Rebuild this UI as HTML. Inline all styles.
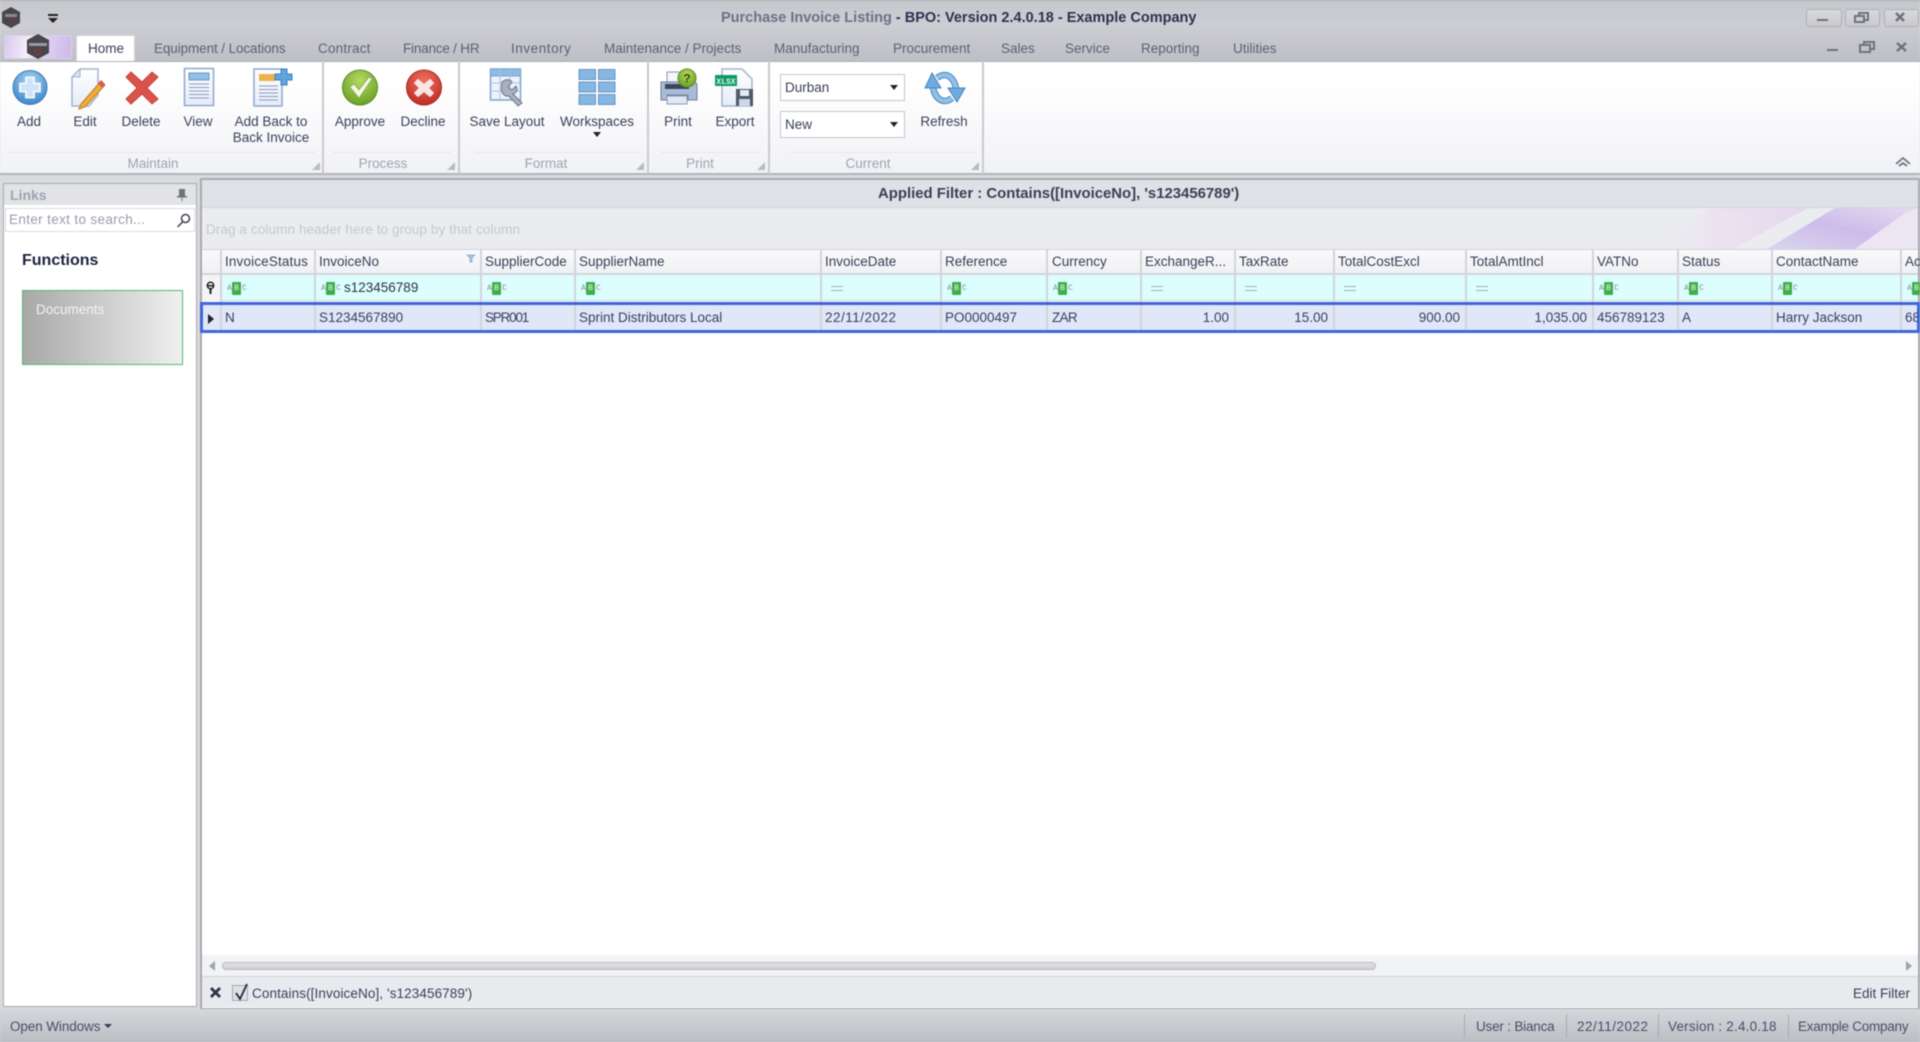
<!DOCTYPE html>
<html>
<head>
<meta charset="utf-8">
<title>Purchase Invoice Listing</title>
<style>
html,body{margin:0;padding:0;width:1920px;height:1042px;overflow:hidden;background:#d9dade}
body{position:relative;font-family:"Liberation Sans",sans-serif;font-size:13.5px;color:#33385a}
#wrap{position:absolute;left:0;top:0;width:1920px;height:1042px;filter:blur(.4px)}
.b{position:absolute}
.t{position:absolute;white-space:nowrap;line-height:16px;height:16px}
.c{transform:translateX(-50%)}
.r{transform:translateX(-100%)}
.tab{color:#5c6072}
.cap{color:#a0a4ae}
.hd{color:#3b3e55}
.cell{color:#3a3f5c}
.vl{position:absolute;width:2px;background:#d3d4da}
.lbl{color:#3a3f58}
svg{position:absolute;overflow:visible}
.ab{position:absolute;top:282px;width:20px;height:13px;font-family:"Liberation Mono",monospace;font-size:8px;line-height:13px}
.ab i{position:absolute;font-style:normal;color:#858a8c;top:0}
.ab i.m{left:5px;width:9px;height:13px;background:#3fae4a;color:#e8f8e8;text-align:center;border-radius:1px}
.ab i.a{left:0}.ab i.z{left:15px}
.eq{position:absolute;top:286px;width:12px;height:1px;border-top:1.5px solid #a8acb2;border-bottom:1.5px solid #a8acb2;padding-top:1.5px}
.sep{position:absolute;top:61px;height:113px;width:2px;background:#c9cad0}
.tri{position:absolute;width:0;height:0;border-left:8px solid transparent;border-bottom:8px solid #b9bbc2}
.cmb{position:absolute;left:780px;width:123px;height:25px;background:#fff;border:1px solid #c3c5cc}
.cmb:after{content:"";position:absolute;right:6px;top:10px;border-left:4px solid transparent;border-right:4px solid transparent;border-top:5px solid #222}
</style>
</head>
<body>
<div id="wrap">
<!-- title bar -->
<div class="b" style="left:0;top:0;width:1920px;height:61px;background:linear-gradient(#c6c7cc,#cdced3 40%,#bebfc6)"></div>
<div class="b" style="left:0;top:0;width:1920px;height:1px;background:#a8a9ad"></div>
<svg style="left:0;top:0" width="60" height="32"><polygon points="11,7 20,12 20,23 11,28 2,23 2,12" fill="#47474b"/><rect x="5" y="14" width="12" height="3" fill="#8b8b8f"/><circle cx="11" cy="21" r="2" fill="none" stroke="#8a3030"/><rect x="48" y="14" width="10" height="2" fill="#222"/><polygon points="48,18 58,18 53,23" fill="#222"/></svg>
<div class="t" style="left:721px;top:10px;font-weight:bold;font-size:14.5px;color:#6c7186">Purchase Invoice Listing <span style="color:#2d3150">- BPO: Version 2.4.0.18 - Example Company</span></div>
<!-- window buttons -->
<div class="b" style="left:1806px;top:9px;width:34px;height:16px;border:1px solid #aeb0b6;border-radius:3px;background:linear-gradient(#d8d9dd,#c8c9ce)"></div>
<div class="b" style="left:1845px;top:9px;width:33px;height:16px;border:1px solid #aeb0b6;border-radius:3px;background:linear-gradient(#d8d9dd,#c8c9ce)"></div>
<div class="b" style="left:1884px;top:9px;width:33px;height:16px;border:1px solid #aeb0b6;border-radius:3px;background:linear-gradient(#d8d9dd,#c8c9ce)"></div>
<svg style="left:1800px;top:0" width="120" height="60" fill="none" stroke="#6f7279" stroke-width="2">
<path d="M17 20h11"/>
<path d="M59 16v-3h9v7h-3M55 16h9v6h-9z"/>
<path d="M96 13l8 8M104 13l-8 8" stroke-width="2.5"/>
<path d="M27 50h11"/>
<path d="M64 45v-3h10v7h-3M60 45h10v7h-10z"/>
<path d="M97 43l9 8M106 43l-9 8" stroke-width="2.5"/>
</svg>
<!-- app button -->
<div class="b" style="left:4px;top:35px;width:66px;height:22px;border:1px solid #d5d5de;background:linear-gradient(100deg,#d9c7ef,#f4effa 35%,#e0cff3 60%,#cdb9ea)"></div>
<svg style="left:26px;top:33px" width="24" height="27"><polygon points="12,1 23,7 23,20 12,26 1,20 1,7" fill="#47474b"/><rect x="3" y="10" width="18" height="3" fill="#9a9a9e"/><circle cx="12" cy="19" r="2.5" fill="none" stroke="#a03030"/></svg>
<!-- tabs -->
<div class="b" style="left:76px;top:35px;width:59px;height:27px;background:#fff;border:1px solid #d2d3d8;border-bottom:0;box-sizing:border-box"></div>
<div class="t" style="left:88px;top:41px;color:#3a3f5c">Home</div>
<div class="t tab" style="left:154px;top:41px;letter-spacing:-.1px">Equipment / Locations</div>
<div class="t tab" style="left:318px;top:41px;letter-spacing:.2px">Contract</div>
<div class="t tab" style="left:403px;top:41px;letter-spacing:-.2px">Finance / HR</div>
<div class="t tab" style="left:511px;top:41px;letter-spacing:.55px">Inventory</div>
<div class="t tab" style="left:604px;top:41px">Maintenance / Projects</div>
<div class="t tab" style="left:774px;top:41px">Manufacturing</div>
<div class="t tab" style="left:893px;top:41px">Procurement</div>
<div class="t tab" style="left:1001px;top:41px">Sales</div>
<div class="t tab" style="left:1065px;top:41px">Service</div>
<div class="t tab" style="left:1141px;top:41px">Reporting</div>
<div class="t tab" style="left:1233px;top:41px">Utilities</div>
<!-- ribbon -->
<div class="b" style="left:0;top:61px;width:1920px;height:114px;background:linear-gradient(#fff 20%,#f1f2f6);border-top:1px solid #b0b1b6;border-bottom:2px solid #b3b4ba;box-sizing:border-box"></div>
<div class="sep" style="left:322px"></div><div class="sep" style="left:458px"></div><div class="sep" style="left:647px"></div><div class="sep" style="left:768px"></div><div class="sep" style="left:982px"></div>
<div class="b" style="left:10px;top:152px;width:305px;height:1px;background:#e6e7eb"></div>
<div class="b" style="left:332px;top:152px;width:120px;height:1px;background:#e6e7eb"></div>
<div class="b" style="left:475px;top:152px;width:165px;height:1px;background:#e6e7eb"></div>
<div class="b" style="left:660px;top:152px;width:100px;height:1px;background:#e6e7eb"></div>
<div class="b" style="left:790px;top:152px;width:185px;height:1px;background:#e6e7eb"></div>
<div class="tri" style="left:312px;top:162px"></div><div class="tri" style="left:447px;top:162px"></div><div class="tri" style="left:636px;top:162px"></div><div class="tri" style="left:757px;top:162px"></div><div class="tri" style="left:971px;top:162px"></div>
<!-- ribbon icons -->
<svg style="left:0;top:60px" width="1000" height="60">
<defs>
<radialGradient id="bl" cx=".5" cy=".3" r=".8"><stop offset="0" stop-color="#a8d4f2"/><stop offset="1" stop-color="#2f7cc4"/></radialGradient>
<radialGradient id="gr" cx=".5" cy=".3" r=".8"><stop offset="0" stop-color="#b8d860"/><stop offset="1" stop-color="#5c9a1e"/></radialGradient>
<radialGradient id="rd" cx=".5" cy=".3" r=".8"><stop offset="0" stop-color="#ee7060"/><stop offset="1" stop-color="#b8231c"/></radialGradient>
<linearGradient id="pg" x1="0" y1="0" x2="0" y2="1"><stop offset="0" stop-color="#fff"/><stop offset="1" stop-color="#e6ecf7"/></linearGradient>
</defs>
<!-- add -->
<circle cx="30" cy="27.5" r="17" fill="url(#bl)" stroke="#3a78b8"/>
<path d="M26 17.500h8v6h6v8h-6v6h-8v-6h-6v-8h6z" fill="#cfe4f5" stroke="#f4fafe" stroke-width="1.800"/>
<!-- edit -->
<path d="M80 9h18v26l-9 11h-17v-29z" fill="url(#pg)" stroke="#a4b3cf" stroke-width="1.500"/>
<path d="M72 17h8v-8z" fill="#dde4f0" stroke="#a4b3cf"/>
<path d="M81 44l20-23 4 4-20 22-6 2z" fill="#f0a93a" stroke="#b98028"/>
<path d="M98 23l3-3 4 4-3 4z" fill="#d85a50"/>
<!-- delete -->
<path d="M131 12l11 10 10-10 6 5-11 11 11 11-6 5-10-10-11 10-5-5 11-11-11-11z" fill="#d9534a" stroke="#c8453c"/>
<!-- view -->
<rect x="184.500" y="8.500" width="29" height="37" fill="url(#pg)" stroke="#8ea6d0" stroke-width="1.500"/>
<rect x="189" y="13" width="20" height="7" fill="#8fc0e6" stroke="#6e94c0"/>
<path d="M189 24h20M189 27.500h20M189 31h20M189 34.500h20M189 38h20" stroke="#8a9cc4"/>
<!-- addback -->
<path d="M254 9h28v26l0 11h-28z" fill="url(#pg)" stroke="#8ea6d0" stroke-width="1.500"/>
<rect x="259" y="14" width="16" height="7" fill="#eeb04a"/>
<path d="M259 26h19M259 29.500h19M259 33h19M259 36.500h19M259 40h19" stroke="#8a9cc4"/>
<path d="M281 9h6v5h5v6h-5v5h-6v-5h-6v-6h6z" fill="#5fa6dc" stroke="#3f80bc"/>
<!-- approve -->
<circle cx="360" cy="27.500" r="17.500" fill="url(#gr)" stroke="#5a8a20"/>
<path d="M350 27l4-3 5 6 10-13 3 2-13 19z" fill="#f2f8e8" stroke="#86a850" stroke-width=".7"/>
<!-- decline -->
<circle cx="424" cy="27.500" r="17.500" fill="url(#rd)" stroke="#a82820"/>
<path d="M418 19.500l6 5 6-5 3.500 3.500-5 5 5 5-3.500 3.500-6-5-6 5-3.500-3.500 5-5-5-5z" fill="#f6e6e4" stroke="#f6e6e4" stroke-linejoin="round"/>
<!-- save layout -->
<rect x="490.500" y="9" width="30" height="31" fill="#eef3fb" stroke="#7ea3d0" stroke-width="1.500"/>
<rect x="490.500" y="9" width="30" height="7" fill="#8dbce4" stroke="#7ea3d0"/>
<path d="M500 9v31M510 9v31M490 23h30M490 31h30" stroke="#a9c2e2"/>
<path d="M502 22c3-3 8-3 10 0l-4 5 4 3 4-4c2 3 1 7-3 8l9 9-4 3-9-10c-5 1-9-3-7-14z" fill="#a9b1bd" stroke="#6d7582"/>
<!-- workspaces -->
<g fill="#86b6e2" stroke="#6795c6"><rect x="579" y="9.500" width="16.500" height="10"/><rect x="598.500" y="9.500" width="16.500" height="10"/><rect x="579" y="22" width="16.500" height="10"/><rect x="598.500" y="22" width="16.500" height="10"/><rect x="579" y="34.500" width="16.500" height="10"/><rect x="598.500" y="34.500" width="16.500" height="10"/></g>
<!-- print -->
<rect x="667" y="12" width="22" height="10" fill="#f3f5fa" stroke="#8d98aa"/>
<path d="M661 22h33a3 3 0 0 1 3 3v15h-9v-5h-21v5h-6z" fill="#a8bcd8" stroke="#6d7f9a"/>
<rect x="665" y="24" width="24" height="5" fill="#3c4656"/>
<rect x="667" y="36" width="20" height="8" fill="#dfe8f5" stroke="#8d98aa"/>
<circle cx="687" cy="18" r="9" fill="url(#gr)" stroke="#5a8a20"/>
<text x="687" y="22.500" text-anchor="middle" font-family="Liberation Sans" font-weight="bold" font-size="12" fill="#2f4a10">?</text>
<!-- export -->
<path d="M722 9h20l10 10v27h-30z" fill="url(#pg)" stroke="#a4b3cf" stroke-width="1.500"/>
<rect x="715" y="15" width="22" height="11" fill="#0d9a66"/>
<text x="726" y="24" text-anchor="middle" font-family="Liberation Mono" font-weight="bold" font-size="8" fill="#dff5ea">XLSX</text>
<rect x="736" y="29" width="17" height="17" fill="#4d5a6a"/><rect x="740" y="30" width="9" height="6" fill="#e6ebf2"/><rect x="739" y="39" width="11" height="7" fill="#cfd7e2"/>
<!-- refresh -->
<g fill="none" stroke-linecap="butt">
<path d="M937 18C945 12 953 15 956 28" stroke="#4a86bc" stroke-width="6.500"/>
<path d="M952 38C945 44 936 41 933 28" stroke="#4a86bc" stroke-width="6.500"/>
<path d="M937 18C945 12 953 15 956 28" stroke="#8fc2ea" stroke-width="4.500"/>
<path d="M952 38C945 44 936 41 933 28" stroke="#8fc2ea" stroke-width="4.500"/>
</g>
<polygon points="932,13 925,28 941,28" fill="#6caadf" stroke="#4a86bc"/>
<polygon points="957,42 948,28 965,28" fill="#6caadf" stroke="#4a86bc"/>
<!-- dropdown arrow workspaces -->
<polygon points="593,132 601,132 597,137" fill="#222" transform="translate(0,-60)"/>
</svg>
<!-- ribbon labels -->
<div class="t c lbl" style="left:29px;top:114px">Add</div>
<div class="t c lbl" style="left:85px;top:114px">Edit</div>
<div class="t c lbl" style="left:141px;top:114px">Delete</div>
<div class="t c lbl" style="left:198px;top:114px">View</div>
<div class="t c lbl" style="left:271px;top:114px">Add Back to</div>
<div class="t c lbl" style="left:271px;top:130px">Back Invoice</div>
<div class="t c lbl" style="left:360px;top:114px">Approve</div>
<div class="t c lbl" style="left:423px;top:114px">Decline</div>
<div class="t c lbl" style="left:507px;top:114px">Save Layout</div>
<div class="t c lbl" style="left:597px;top:114px">Workspaces</div>
<div class="t c lbl" style="left:678px;top:114px">Print</div>
<div class="t c lbl" style="left:735px;top:114px">Export</div>
<div class="t c lbl" style="left:944px;top:114px">Refresh</div>
<div class="t c cap" style="left:153px;top:156px">Maintain</div>
<div class="t c cap" style="left:383px;top:156px">Process</div>
<div class="t c cap" style="left:546px;top:156px">Format</div>
<div class="t c cap" style="left:700px;top:156px">Print</div>
<div class="t c cap" style="left:868px;top:156px">Current</div>
<div class="cmb" style="top:74px"></div><div class="cmb" style="top:111px"></div>
<div class="t lbl" style="left:785px;top:80px">Durban</div>
<div class="t lbl" style="left:785px;top:117px">New</div>
<svg style="left:1890px;top:150px" width="24" height="20" fill="none" stroke="#707480" stroke-width="1.800"><path d="M6 14l7-6 7 6M9 16l4-3 4 3"/></svg>
<!-- left panel -->
<div class="b" style="left:3px;top:183px;width:194px;height:824px;background:#fff;border:1px solid #a9aab0;box-sizing:border-box"></div>
<div class="b" style="left:4px;top:184px;width:192px;height:21px;background:#e2e3e7"></div>
<div class="t" style="left:10px;top:187px;font-weight:bold;font-size:14px;color:#9fa3ae">Links</div>
<svg style="left:176px;top:189px" width="12" height="13" fill="#6f7279"><rect x="3" y="0" width="6" height="7"/><rect x="1" y="7" width="10" height="1.500"/><rect x="5.500" y="8" width="1" height="4"/></svg>
<div class="b" style="left:5px;top:208px;width:190px;height:24px;background:#fff;border:1px solid #dcdde3;box-sizing:border-box"></div>
<div class="t" style="left:9px;top:212px;color:#989cac;letter-spacing:.35px">Enter text to search...</div>
<svg style="left:176px;top:213px" width="15" height="15" fill="none" stroke="#41444e" stroke-width="1.500"><circle cx="9.500" cy="5.500" r="4"/><path d="M6.500 9l-5 5"/></svg>
<div class="t" style="left:22px;top:253px;font-weight:bold;font-size:16px;color:#1e2240">Functions</div>
<div class="b" style="left:22px;top:290px;width:161px;height:75px;background:linear-gradient(90deg,#a8a8a8,#f0f0f0);border:1.500px solid #4fb978;box-sizing:border-box"></div>
<div class="t" style="left:36px;top:302px;color:#f2f2f2">Documents</div>
<!-- grid area -->
<div class="b" style="left:200px;top:178px;width:1720px;height:831px;background:#fff;border:1px solid #a9aab0;border-width:2px 2px 1px 2px;box-sizing:border-box"></div>
<div class="b" style="left:202px;top:180px;width:1716px;height:27px;background:#e0e1e6;border-bottom:1px solid #d3d4da;box-sizing:content-box"></div>
<div class="t" style="left:878px;top:186px;font-weight:bold;font-size:14.9px;color:#3b3e55">Applied Filter : Contains([InvoiceNo], 's123456789')</div>
<div class="b" style="left:202px;top:208px;width:1716px;height:41px;background:#ebecf0"></div>
<div class="t" style="left:206px;top:222px;color:#c6c8d0;letter-spacing:.1px">Drag a column header here to group by that column</div>
<svg style="left:1560px;top:208px" width="358" height="41">
<defs>
<linearGradient id="sw1" x1="0" y1="0" x2="1" y2="0"><stop offset="0" stop-color="#ebecf0"/><stop offset=".4" stop-color="#ebe4f0"/><stop offset="1" stop-color="#e6d6ee"/></linearGradient>
<linearGradient id="sw2" x1="0" y1="1" x2="1" y2="0"><stop offset="0" stop-color="#d9d5ef"/><stop offset=".5" stop-color="#cdbcea"/><stop offset="1" stop-color="#e4dcf0"/></linearGradient>
</defs>
<polygon points="100,41 150,0 248,0 173,41" fill="url(#sw1)"/>
<polygon points="207,41 250,15 275,0 358,0 358,12 340,41" fill="url(#sw2)"/>
<polygon points="295,41 345,5 358,0 358,41" fill="#ebe6f2"/>
</svg>
<!-- header row -->
<div class="b" style="left:202px;top:249px;width:1716px;height:26px;background:linear-gradient(#fafafb,#f0f1f4);border-top:1px solid #d3d4da;border-bottom:2px solid #d3d4da;box-sizing:border-box"></div>
<div class="b" style="left:202px;top:275px;width:1716px;height:26px;background:#dcfefe;border-bottom:1px solid #d3d4da;box-sizing:border-box"></div>
<div class="b" style="left:202px;top:275px;width:18px;height:26px;background:#f3f4f6"></div>
<!-- selected row bg -->
<div class="b" style="left:200px;top:302px;width:1720px;height:31px;background:#e0e7f9"></div>
<!-- column lines -->
<div class="vl" style="left:220px;top:249px;height:81px"></div>
<div class="vl" style="left:314px;top:249px;height:81px"></div>
<div class="vl" style="left:480px;top:249px;height:81px"></div>
<div class="vl" style="left:574px;top:249px;height:81px"></div>
<div class="vl" style="left:820px;top:249px;height:81px"></div>
<div class="vl" style="left:940px;top:249px;height:81px"></div>
<div class="vl" style="left:1046px;top:249px;height:81px"></div>
<div class="vl" style="left:1140px;top:249px;height:81px"></div>
<div class="vl" style="left:1234px;top:249px;height:81px"></div>
<div class="vl" style="left:1333px;top:249px;height:81px"></div>
<div class="vl" style="left:1465px;top:249px;height:81px"></div>
<div class="vl" style="left:1592px;top:249px;height:81px"></div>
<div class="vl" style="left:1677px;top:249px;height:81px"></div>
<div class="vl" style="left:1771px;top:249px;height:81px"></div>
<div class="vl" style="left:1900px;top:249px;height:81px"></div>
<!-- selected row border above lines -->
<div class="b" style="left:200px;top:302px;width:1720px;height:31px;border:3px solid #3f66d9;box-sizing:border-box"></div>
<!-- header text -->
<div class="t hd" style="left:225px;top:254px;letter-spacing:.15px">InvoiceStatus</div>
<div class="t hd" style="left:319px;top:254px">InvoiceNo</div>
<svg style="left:466px;top:254px" width="10" height="9"><path d="M1 1h8l-3 3v4h-2v-4z" fill="#a8c4e4" stroke="#7ea3d0" stroke-width=".7"/></svg>
<div class="t hd" style="left:485px;top:254px">SupplierCode</div>
<div class="t hd" style="left:579px;top:254px">SupplierName</div>
<div class="t hd" style="left:825px;top:254px">InvoiceDate</div>
<div class="t hd" style="left:945px;top:254px">Reference</div>
<div class="t hd" style="left:1052px;top:254px">Currency</div>
<div class="t hd" style="left:1145px;top:254px">ExchangeR...</div>
<div class="t hd" style="left:1239px;top:254px">TaxRate</div>
<div class="t hd" style="left:1338px;top:254px">TotalCostExcl</div>
<div class="t hd" style="left:1470px;top:254px">TotalAmtIncl</div>
<div class="t hd" style="left:1597px;top:254px">VATNo</div>
<div class="t hd" style="left:1682px;top:254px">Status</div>
<div class="t hd" style="left:1776px;top:254px">ContactName</div>
<div class="t hd" style="left:1905px;top:254px;width:15px;overflow:hidden">Ac</div>
<!-- filter row -->
<svg style="left:205px;top:282px" width="12" height="14" fill="#222"><circle cx="5.500" cy="3.500" r="3.200" fill="none" stroke="#222" stroke-width="1.500"/><path d="M4.500 6h2v6h-2z"/><path d="M3 3h5v1.500h-5z"/></svg>
<div class="ab" style="left:227px"><i class="a">A</i><i class="m">B</i><i class="z">C</i></div>
<div class="ab" style="left:321px"><i class="a">A</i><i class="m">B</i><i class="z">C</i></div>
<div class="t cell" style="left:344px;top:280px;color:#2e3245">s123456789</div>
<div class="ab" style="left:487px"><i class="a">A</i><i class="m">B</i><i class="z">C</i></div>
<div class="ab" style="left:581px"><i class="a">A</i><i class="m">B</i><i class="z">C</i></div>
<div class="eq" style="left:831px"></div>
<div class="ab" style="left:947px"><i class="a">A</i><i class="m">B</i><i class="z">C</i></div>
<div class="ab" style="left:1053px"><i class="a">A</i><i class="m">B</i><i class="z">C</i></div>
<div class="eq" style="left:1151px"></div>
<div class="eq" style="left:1245px"></div>
<div class="eq" style="left:1344px"></div>
<div class="eq" style="left:1476px"></div>
<div class="ab" style="left:1599px"><i class="a">A</i><i class="m">B</i><i class="z">C</i></div>
<div class="ab" style="left:1684px"><i class="a">A</i><i class="m">B</i><i class="z">C</i></div>
<div class="ab" style="left:1778px"><i class="a">A</i><i class="m">B</i><i class="z">C</i></div>
<div class="ab" style="left:1907px;width:13px;overflow:hidden"><i class="a">A</i><i class="m">B</i><i class="z">C</i></div>
<!-- data row -->
<svg style="left:207px;top:313px" width="8" height="12"><polygon points="1,1 7,6 1,11" fill="#222"/></svg>
<div class="t cell" style="left:225px;top:310px">N</div>
<div class="t cell" style="left:319px;top:310px">S1234567890</div>
<div class="t cell" style="left:485px;top:310px;letter-spacing:-1.2px">SPR001</div>
<div class="t cell" style="left:579px;top:310px">Sprint Distributors Local</div>
<div class="t cell" style="left:825px;top:310px;letter-spacing:.5px">22/11/2022</div>
<div class="t cell" style="left:945px;top:310px">PO0000497</div>
<div class="t cell" style="left:1052px;top:310px;letter-spacing:-.7px">ZAR</div>
<div class="t cell r" style="left:1229px;top:310px">1.00</div>
<div class="t cell r" style="left:1328px;top:310px">15.00</div>
<div class="t cell r" style="left:1460px;top:310px">900.00</div>
<div class="t cell r" style="left:1587px;top:310px">1,035.00</div>
<div class="t cell" style="left:1597px;top:310px">456789123</div>
<div class="t cell" style="left:1682px;top:310px">A</div>
<div class="t cell" style="left:1776px;top:310px">Harry Jackson</div>
<div class="t cell" style="left:1905px;top:310px;width:13px;overflow:hidden">68</div>
<!-- scrollbar -->
<div class="b" style="left:202px;top:955px;width:1716px;height:22px;background:#f2f3f6;border-bottom:1px solid #d3d4da;box-sizing:border-box"></div>
<svg style="left:207px;top:961px" width="10" height="10"><polygon points="8,0 8,10 2,5" fill="#9fa2a8"/></svg>
<svg style="left:1904px;top:961px" width="10" height="10"><polygon points="2,0 2,10 8,5" fill="#9fa2a8"/></svg>
<div class="b" style="left:222px;top:962px;width:1154px;height:8px;background:linear-gradient(#e0e1e4,#cfd0d5);border:1px solid #b8bac0;border-radius:5px;box-sizing:border-box"></div>
<!-- filter panel -->
<div class="b" style="left:202px;top:977px;width:1716px;height:30px;background:#e9eaee"></div>
<svg style="left:209px;top:987px" width="14" height="12" fill="none" stroke="#2f3344" stroke-width="2.800"><path d="M2 1l9 9M11 1l-9 9"/></svg>
<div class="b" style="left:232px;top:985px;width:16px;height:16px;background:#dfe0e5;border:1px solid #a8aab2;box-sizing:border-box"></div>
<svg style="left:232px;top:982px" width="18" height="20" fill="none" stroke="#26293a" stroke-width="1.800"><path d="M4 11l4 6 7-15"/></svg>
<div class="t cell" style="left:252px;top:986px;letter-spacing:.1px">Contains([InvoiceNo], 's123456789')</div>
<div class="t cell r" style="left:1910px;top:986px">Edit Filter</div>
<!-- status bar -->
<div class="b" style="left:0;top:1009px;width:1920px;height:33px;background:linear-gradient(#d6d7db,#bdbec5)"></div>
<div class="t cell" style="left:10px;top:1019px;color:#4a4e68;letter-spacing:-.1px">Open Windows</div>
<svg style="left:104px;top:1024px" width="9" height="6"><polygon points="0,0 8,0 4,4" fill="#3a3e52"/></svg>
<div class="vl" style="left:1464px;top:1014px;height:24px;width:1px;background:#a9aab2"></div>
<div class="vl" style="left:1566px;top:1014px;height:24px;width:1px;background:#a9aab2"></div>
<div class="vl" style="left:1658px;top:1014px;height:24px;width:1px;background:#a9aab2"></div>
<div class="vl" style="left:1788px;top:1014px;height:24px;width:1px;background:#a9aab2"></div>
<div class="t" style="left:1476px;top:1019px;color:#4a4e68;letter-spacing:-.2px">User : Bianca</div>
<div class="t" style="left:1577px;top:1019px;color:#4a4e68;letter-spacing:.5px">22/11/2022</div>
<div class="t" style="left:1668px;top:1019px;color:#4a4e68;letter-spacing:.2px">Version : 2.4.0.18</div>
<div class="t" style="left:1798px;top:1019px;color:#4a4e68;letter-spacing:-.25px">Example Company</div>
</div>
</body>
</html>
